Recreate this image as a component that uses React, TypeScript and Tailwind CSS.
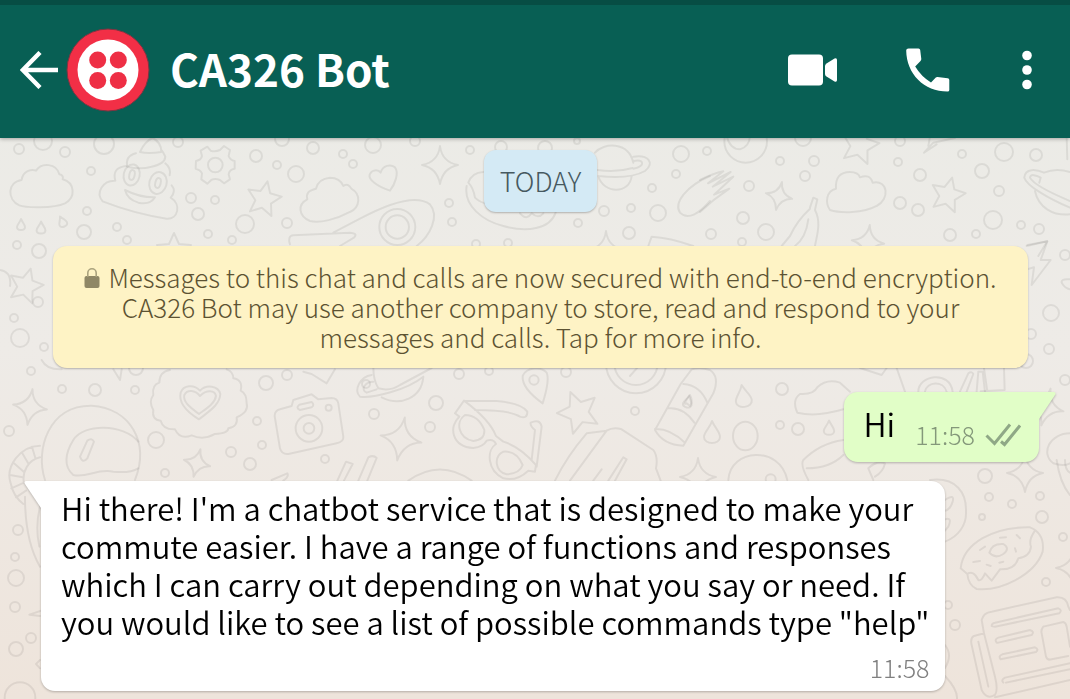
import React from "react";

type Dot = [number, number, number];

const bubbles: Dot[] = [
  [19, 149, 5], [43, 141, 9], [65, 152, 5], [104, 144, 10], [91, 171, 4], [178, 142, 5],
  [256, 156, 6], [277, 165, 4], [282, 139, 7], [313, 148, 6], [296, 174, 8], [343, 154, 4],
  [353, 164, 4], [191, 198, 5], [215, 200, 4], [198, 214, 6], [245, 224, 9], [287, 223, 5],
  [208, 234, 4], [232, 240, 4], [127, 240, 4], [117, 227, 4], [87, 211, 4], [84, 232, 7],
  [17, 245, 4], [39, 251, 7],
  [373, 145, 8], [415, 141, 5], [470, 150, 4], [501, 147, 6], [545, 148, 7], [577, 141, 3],
  [449, 203, 4], [452, 222, 4], [604, 211, 5], [631, 208, 4], [658, 213, 8], [578, 223, 4],
  [629, 233, 6], [681, 154, 8], [676, 174, 4], [652, 188, 4], [707, 151, 4],
  [476, 244, 4], [508, 243, 4],
  [780, 161, 4], [814, 161, 5], [805, 176, 5], [803, 138, 8], [749, 186, 5], [743, 218, 6],
  [711, 234, 5], [766, 232, 8], [742, 242, 4], [900, 141, 5], [898, 162, 4], [920, 175, 6],
  [962, 154, 4], [1004, 152, 9], [1036, 155, 6], [982, 171, 7], [999, 191, 5], [900, 203, 6],
  [918, 210, 6], [993, 220, 9], [1021, 225, 4], [1039, 229, 5], [950, 235, 6], [976, 234, 4],
  [1065, 255, 5], [1051, 313, 8], [1031, 334, 5], [1049, 349, 5], [1026, 361, 7], [1065, 380, 5],
  [31, 371, 4], [62, 389, 4], [95, 390, 6], [135, 390, 4], [9, 431, 5], [136, 368, 7],
  [156, 440, 8], [266, 383, 7], [287, 375, 5], [257, 421, 4], [231, 452, 5], [262, 445, 4],
  [250, 464, 6], [165, 473, 4], [325, 459, 4], [366, 384, 4],
  [374, 414, 5], [436, 403, 7], [430, 427, 5], [459, 374, 5], [489, 371, 4], [566, 372, 5],
  [635, 411, 4], [782, 389, 6], [780, 425, 4], [798, 429, 6], [985, 476, 7],
  [989, 497, 4], [1012, 504, 4], [1040, 496, 4], [982, 517, 3], [1042, 517, 6], [1063, 537, 4],
  [1046, 582, 4], [948, 605, 4], [955, 625, 5],
  [18, 530, 5], [15, 557, 4], [16, 578, 8], [15, 607, 5], [31, 638, 5], [16, 649, 7],
  [20, 338, 9], [38, 302, 5], [14, 318, 4], [44, 347, 4],
];

const STAR = "M0 -17 L5 -6 L17 -5 L8 4 L11 16 L0 10 L-11 16 L-8 4 L-17 -5 L-5 -6 Z";
const SPARK = "M0 -19 Q2 -3 18 0 Q3 3 0 19 Q-3 3 -18 0 Q-2 -3 0 -19 Z";
const DROP = "M0 -10 C3 -3 8 1 8 6 C8 14 -8 14 -8 6 C-8 1 -2 -3 0 -10 Z";

const stars = [
  "translate(264 198) rotate(12)",
  "translate(860 144) rotate(14) scale(1.1)",
  "translate(948 194) rotate(14)",
  "translate(578 411) rotate(-22) scale(1.2)",
  "translate(26 285) rotate(16)",
  "translate(174 250)",
];

const sparks = [
  "translate(440 165)",
  "translate(779 196) rotate(12) scale(.75)",
  "translate(30 407) rotate(8) scale(.95)",
  "translate(197 463) rotate(14) scale(.75)",
  "translate(401 439) rotate(10) scale(1.15)",
  "translate(698 477)",
  "translate(1025 473)",
  "translate(1046 407) rotate(14)",
  "translate(868 242) rotate(6) scale(.9)",
  "translate(606 250)",
  "translate(1074 568)",
];

const drops = [
  "translate(21 224) scale(.5)",
  "translate(41 227) scale(.55)",
  "translate(62 221) rotate(-24) scale(.5)",
  "translate(743 395) rotate(-8)",
  "translate(712 431)",
  "translate(829 427) scale(.65)",
  "translate(688 401) rotate(12) scale(.55)",
];

function Wallpaper() {
  return (
    <svg
      aria-hidden="true"
      className="absolute inset-0 h-full w-full"
      viewBox="0 0 1070 699"
      preserveAspectRatio="xMinYMin slice"
      fill="none"
      stroke="#000"
      strokeOpacity=".07"
      strokeWidth="2"
      strokeLinejoin="round"
      strokeLinecap="round"
    >
      {bubbles.map(([x, y, r], i) => (
        <circle key={i} cx={x} cy={y} r={r} />
      ))}
      {stars.map((t) => <path key={t} d={STAR} transform={t} vectorEffect="non-scaling-stroke" />)}
      {sparks.map((t) => <path key={t} d={SPARK} transform={t} vectorEffect="non-scaling-stroke" />)}
      {drops.map((t) => <path key={t} d={DROP} transform={t} vectorEffect="non-scaling-stroke" />)}

      <g transform="translate(0 136) scale(.3333)" strokeWidth="6">
        <path d="M65 132 C68 105 95 98 108 104 C125 78 170 82 178 115 Q192 118 188 130 C225 140 228 185 195 202 C160 218 75 215 58 208 C20 190 22 138 65 132 Z" />
        <path d="M420 48 Q435 15 458 6 Q485 20 484 48 M420 48 Q445 54 484 48 M408 52 Q375 60 382 92 Q420 102 455 92 Q495 84 496 62 Q490 48 484 42" />
        <path d="M378 90 Q335 95 346 134 C310 132 285 170 308 196 Q400 232 500 248 C535 250 545 205 512 185 Q530 165 515 148 M496 82 Q514 95 509 118" />
        <ellipse cx="395" cy="117" rx="24" ry="32" transform="rotate(12 395 117)" />
        <ellipse cx="396" cy="117" rx="8" ry="15" transform="rotate(12 396 117)" />
        <ellipse cx="474" cy="141" rx="26" ry="33" transform="rotate(14 474 141)" />
        <ellipse cx="474" cy="141" rx="8" ry="15" transform="rotate(14 474 141)" />
        <path d="M375 162 Q420 185 465 184 Q450 208 415 200 Q382 190 375 162 Z" />
        <path d="M622 32 L632 44 Q647 48 660 42 L672 30 L690 42 L686 60 Q690 72 704 75 L704 98 Q688 100 686 115 L690 130 L672 142 L660 132 Q645 126 634 132 L622 143 L604 130 L606 112 Q602 102 587 98 L588 75 Q604 72 606 60 L602 44 Z" />
        <circle cx="646" cy="87" r="22" />
        <path d="M922 190 Q915 165 948 158 Q955 128 990 125 Q1020 125 1030 150 Q1045 140 1054 158 C1085 175 1080 215 1050 228 C1010 250 960 262 930 255 C895 240 892 205 922 190 Z" />
        <path d="M880 298 L1050 290 Q1075 292 1062 305 L1020 330 M880 298 Q862 300 870 325 M1000 290 L1080 248 C1170 200 1250 175 1290 205 C1320 240 1290 300 1250 330" />
        <circle cx="1192" cy="273" r="54" /><circle cx="1192" cy="273" r="35" />
        <path d="M1170 164 C1130 150 1105 130 1109 116 C1115 100 1135 100 1142 110 C1148 88 1172 83 1185 94 C1198 110 1185 145 1170 164 Z" />
      </g>

      <g transform="translate(350 136) scale(.3333)" strokeWidth="6">
        <path d="M400 108 Q365 110 355 140 Q370 155 375 185 Q390 200 415 205 M350 150 C340 210 400 255 460 270 C530 290 600 280 617 230 M510 232 Q530 255 545 232 Q565 250 580 232" />
        <path d="M735 50 C760 20 835 15 850 80 M745 120 C760 175 840 175 845 120 M850 62 C895 55 915 80 885 105 C850 125 790 125 745 120 M742 102 Q800 110 848 96 M852 75 C880 68 890 90 850 98" />
        <path d="M1080 120 C1010 150 970 200 990 230 C1015 255 1050 230 1080 195 M895 330 L905 302 Q960 305 1030 330" />
      </g>

      <g transform="translate(700 136) scale(.3333)" strokeWidth="6">
        <circle cx="137" cy="16" r="64" /><path d="M80 0 Q90 40 120 40 Q148 32 150 0" />
        <path d="M0 132 Q40 112 70 106 L24 142 L92 108 L38 152 L100 122 L42 176 L88 158 Q40 190 0 228" />
        <path d="M330 215 L340 185 L352 190 L345 222 C365 260 350 300 345 330 M330 218 Q290 255 270 300 L245 330 M325 250 Q318 305 285 330" />
        <path d="M408 158 Q405 108 450 108 Q475 108 480 124 Q510 112 518 140 C565 130 570 190 530 210 C490 232 420 232 390 222 C375 200 378 165 408 158 Z" />
        <path d="M765 6 L700 20 L672 50 L710 25 M690 2 L685 30" />
        <path d="M1110 215 C1050 190 980 150 973 125 C975 95 1010 100 1032 110 C1060 98 1085 100 1110 108 M1110 195 C1050 170 1000 145 990 125 C990 112 1010 118 1022 125 M1005 165 C1015 215 1060 240 1110 235 M1022 125 L1018 140" />
        <path d="M980 330 L1042 316 L1015 360 M1100 0 L1102 70" />
      </g>

      <g transform="translate(980 230) scale(.3333)" strokeWidth="6">
        <path d="M142 45 L202 34 L182 90 L212 90 L155 165 L162 112 L142 118" />
        <path d="M270 148 Q240 145 246 160 Q255 175 270 178 M72 415 L74 480 L2 484 M12 415 L22 484" />
      </g>

      <g transform="translate(0 360) scale(.3333)" strokeWidth="6">
        <path d="M510 30 Q478 35 478 68 Q455 75 460 105 Q445 125 460 150 Q455 180 482 182 Q490 210 525 208 Q540 240 575 226 Q610 242 645 222 Q685 220 685 205 Q715 200 710 172 Q748 155 740 130 Q740 100 722 92 Q730 60 700 55 Q700 35 680 28" />
        <path d="M597 178 C560 155 535 128 542 98 C550 75 582 72 600 92 C620 72 655 78 661 102 C660 135 625 155 597 178 Z" />
        <path d="M597 162 C570 142 548 125 553 105 C562 88 585 90 600 108 C620 88 645 90 648 108 C645 130 620 145 597 162 Z" />
        <path d="M840 148 L875 138 L880 120 L935 103 L955 118 L995 114 Q1012 114 1015 130 L1030 230 Q1032 245 1010 250 L865 282 Q845 284 840 265 L824 168 Q824 152 840 148 Z M898 134 L935 126 Q945 134 935 142 L900 150 Q886 144 898 134 Z" />
        <circle cx="927" cy="205" r="40" /><circle cx="927" cy="205" r="16" /><circle cx="986" cy="143" r="9" />
        <path d="M135 360 C105 270 145 135 275 137 C390 145 450 245 405 360" />
        <path d="M415 245 C370 190 250 190 220 240 C195 280 190 320 220 345 C260 355 290 325 340 335 Q390 340 415 325 M240 290 L262 242 Q275 232 282 245 L262 295 Q248 312 240 290 Z" />
        <path d="M120 257 C60 258 15 320 32 370 Q40 410 70 432 M120 292 C85 300 65 335 72 370 M96 260 L106 294 M66 278 L86 312 M42 310 L72 336 M30 345 L68 352 M34 385 L72 368 M48 412 L78 392 M75 410 C75 480 85 560 120 620 M120 440 Q105 500 118 560" />
        <path d="M815 360 L862 340 Q868 350 850 362 M910 35 L935 42 L980 70 L1005 28 M340 28 L360 60 L365 28 M125 0 Q140 30 185 28" />
      </g>

      <g transform="translate(340 360) scale(.3333)" strokeWidth="6">
        <path d="M100 24 Q100 60 115 85 Q150 95 180 75 L275 24 M95 45 C60 50 40 90 60 110 C100 115 200 90 250 50 M100 65 C75 65 60 90 80 98 L110 88 M125 112 C180 140 245 115 250 50" />
        <path d="M548 48 Q545 85 608 130 Q630 60 620 38 C605 20 560 20 548 48" /><circle cx="582" cy="60" r="14" />
        <path d="M372 122 L345 160 L358 170 C325 200 335 260 400 264 Q430 260 440 242 Q460 235 468 252 C440 270 440 330 490 355 Q530 365 565 332 L585 335 L588 315 Q540 260 490 245 L468 228 Q450 180 372 122 Z M372 122 L470 123 Q545 130 562 155 Q562 178 540 170 Q510 150 405 150 M590 320 L605 200 Q600 175 572 188 Q570 198 585 210 L575 300" />
        <path d="M375 165 C345 185 355 235 400 243 Q435 240 433 210 Q415 165 375 165 Z M490 275 C460 290 465 335 500 343 Q540 340 548 315 Q530 272 490 275 Z" />
        <circle cx="888" cy="10" r="90" /><circle cx="888" cy="10" r="65" /><path d="M870 48 L895 20" />
        <path d="M645 362 Q680 290 740 220 L800 212 Q820 200 845 208 L940 270 Q955 290 948 325 L962 362 M800 212 L690 362 M760 362 L785 328 M805 362 L850 292 L860 298 L825 362 M205 362 Q300 295 395 362 M-8 362 L18 305 L38 312 L12 362 M55 362 L85 292 Q100 284 110 294 L82 362" />
      </g>

      <g transform="translate(660 360) scale(.3333)" strokeWidth="6">
        <path d="M70 72 Q120 75 142 128 M62 72 L-15 210 Q10 255 70 257 L160 100 Q180 50 150 30 Q120 20 95 28 L62 72 M25 145 Q70 140 103 188 M-15 207 Q30 205 75 248 M80 130 Q65 138 90 105 Q100 125 90 138 Z" />
        <ellipse cx="256" cy="228" rx="37" ry="43" />
        <path d="M412 158 Q395 120 420 102 Q460 105 472 82 Q500 55 540 68 L570 95 M412 158 Q470 172 550 148" />
        <path d="M205 360 C210 265 360 255 382 360 M430 300 Q480 250 550 240 M430 300 Q420 315 445 360 M440 325 Q510 325 550 285 M640 360 L625 325 Q650 300 675 310 Q670 335 645 350" />
        <circle cx="332" cy="358" r="15" />
        <path d="M710 24 L735 95 M775 95 C775 45 870 30 878 95 M795 95 C800 65 850 60 860 95 M900 95 L925 40 Q935 32 940 42 L920 95 M950 95 L955 35 L968 35 L975 95 M1230 220 C1170 220 1140 280 1180 310 Q1210 320 1230 310 M600 24 L665 45 L680 24" />
      </g>

      <g transform="translate(920 460) scale(.3333)" strokeWidth="6">
        <path d="M30 60 C110 50 140 100 138 155 C140 195 115 230 75 245 M75 120 Q105 100 98 125 Q90 150 75 152 M75 178 Q98 170 85 200 L75 212 M410 0 Q420 70 450 105 M435 0 Q435 30 450 38" />
        <path d="M122 325 C130 250 220 200 330 202 Q375 220 368 275 C345 345 240 395 170 387 Q145 375 142 342 L122 325 M142 342 Q160 330 175 360 Q185 365 195 340 L215 362 L240 328 Q285 330 295 295 Q330 290 333 260 Q325 240 345 212" />
        <path d="M208 278 Q215 250 250 252 Q272 265 250 282 Q225 298 208 278 Z M240 233 L258 232 M290 225 L300 235 M285 265 L288 275 M180 270 L195 260 M160 306 L180 303 M200 314 L212 318 M238 308 L250 305" />
        <path d="M192 520 L185 480 Q190 458 215 455 L410 412 Q440 410 445 440 L450 450 M192 520 L162 528 Q150 535 155 555 L185 690 Q200 720 225 705 Q235 690 225 650 L192 520 M225 712 L450 660 M175 545 L205 680 M215 498 Q215 490 225 488 L415 445 Q428 450 418 460 L225 500 Z M230 548 Q222 538 235 533 L330 510 Q345 515 335 525 L235 548 Z M242 598 Q234 588 247 583 L345 562 Q358 568 348 576 Z M370 500 Q362 510 365 520 L378 590 Q382 602 395 598 L445 588 M370 500 L430 486 Q438 488 440 500 L450 560 M250 668 Q242 660 255 653 L450 610 M258 668 L450 628" />
      </g>

      <g transform="translate(0 470) scale(.3333)" strokeWidth="6">
        <circle cx="60" cy="683" r="46" />
        <path d="M130 420 L88 434 L120 438 M120 570 L108 582 L120 595" />
      </g>
      <path d="M0 270 Q12 272 10 286 M945 645 Q953 655 945 668 M945 676 Q958 690 957 699" />
    </svg>
  );
}

function BackIcon() {
  return (
    <svg viewBox="0 0 38 38" className="h-[38px] w-[38px]" fill="none" stroke="white" strokeWidth="4.4">
      <path d="M20 1.5 L2.8 19 L20 36.5 M2.5 19 H38" />
    </svg>
  );
}

function Avatar() {
  return (
    <svg viewBox="0 0 84 84" className="size-[84px]" role="img" aria-label="CA326 Bot">
      <circle cx="42" cy="42" r="41" fill="#f22f46" stroke="#7c3542" strokeWidth="1" />
      <circle cx="42" cy="42" r="30.5" fill="#fff" />
      <g fill="#ee2f45">
        <circle cx="31.7" cy="32" r="8.5" />
        <circle cx="52.3" cy="32" r="8.5" />
        <circle cx="31.7" cy="52.5" r="8.5" />
        <circle cx="52.3" cy="52.5" r="8.5" />
      </g>
    </svg>
  );
}

function Header() {
  return (
    <header className="relative flex h-[138px] items-center border-t-[5px] border-[#074d44] bg-[#085f54] pr-[33px] pb-[3px] pl-5 text-white shadow-[0_1px_4px_rgba(0,0,0,0.3)]">
      <button type="button" aria-label="Back">
        <BackIcon />
      </button>
      <div className="ml-2">
        <Avatar />
      </div>
      <h1 className="ml-5 flex-1 pb-1 text-[44px] leading-none font-bold">CA326 Bot</h1>
      <button type="button" aria-label="Video call">
        <svg viewBox="0 0 50 32" className="h-8 w-[50px]" fill="white">
          <rect x="0" y="0.5" width="35" height="31" rx="4" />
          <path d="M37 12 Q37 10.500 38.500 9.500 L46.500 4.500 Q49 3.500 49 6 V26 Q49 28.500 46.500 27.500 L38.500 22.500 Q37 21.500 37 20 Z" />
        </svg>
      </button>
      <button type="button" aria-label="Voice call" className="ml-[68px]">
        <svg viewBox="0 0 44 44" className="size-11" fill="white">
          <path d="M2.500 0.500 H12.500 Q14 0.500 14.200 2 L15.300 11 Q15.300 12.200 14.500 13 L9.200 18.600 Q15.500 29 25 34.500 L29.800 29.600 Q30.500 28.900 31.500 29 L41.700 30.300 Q43.300 30.600 43.300 32 V42 Q43.300 43.500 41.500 43.500 C18 43.500 0.500 26 0.200 2.500 Q0.200 0.500 2.500 0.500 Z" />
        </svg>
      </button>
      <button type="button" aria-label="More options" className="ml-[67px]">
        <svg viewBox="0 0 20 40" className="h-10 w-5" fill="white">
          <circle cx="10" cy="5.500" r="4.800" />
          <circle cx="10" cy="20" r="4.800" />
          <circle cx="10" cy="34.500" r="4.800" />
        </svg>
      </button>
    </header>
  );
}

export default function App() {
  return (
    <div className="relative flex min-h-screen flex-col overflow-hidden bg-linear-to-b from-[#eaebe6] via-[#eeebe7] to-[#eee4db] font-['Noto_Sans_CJK_SC','Noto_Sans',sans-serif] font-[350]">
      <Wallpaper />
      <Header />
      <main className="relative flex flex-col pt-3 pb-2">
        <section className="flex flex-col items-center pr-[42px] pl-[53px]">
          <time className="rounded-xl bg-[#d4eaf5] px-4 pt-4 pb-4 text-[27px] leading-[30px] font-light text-[#465960] shadow-[0_1px_2px_rgba(0,0,0,0.25)]">
            TODAY
          </time>

          <button
            type="button"
            className="mt-[34px] w-full rounded-[14px] bg-[#fef3c5] px-5 py-4 text-center text-[26px] leading-[30px] font-light text-[#5c5232] shadow-[0_1px_2px_rgba(0,0,0,0.25)]"
          >
            <svg viewBox="0 0 16 20" aria-hidden="true" className="mr-2 inline-block h-5 w-4 align-baseline">
              <rect x="0.500" y="8" width="15" height="12" rx="2" fill="#8f8766" />
              <path d="M3.800 9 V5 a4.200 4.200 0 0 1 8.400 0 V9" fill="none" stroke="#aaa27d" strokeWidth="1.600" />
            </svg>
            Messages to this chat and calls are now secured with end-to-end encryption.
            <br />
            CA326 Bot may use another company to store, read and respond to your
            <br />
            messages and calls. Tap for more info.
          </button>
        </section>

        <article className="relative mt-6 mr-[31px] flex h-[70px] items-start self-end rounded-[14px] rounded-tr-none bg-[#e1fec7] pt-3 pr-[18px] pl-5 drop-shadow-[0_1px_1px_rgba(0,0,0,0.25)]">
          <svg viewBox="0 0 17 28" aria-hidden="true" className="absolute top-0 left-full h-7 w-[17px]" fill="#e1fec7">
            <path d="M0 0 H15 Q17.500 0.500 16 3 L0 27 Z" />
          </svg>
          <p className="text-[32px] leading-[38px] text-black">Hi</p>
          <time className="mt-4 ml-5 text-[25px] leading-7 font-light text-[#84987a]">11:58</time>
          <svg viewBox="0 0 36 24" aria-label="Delivered" role="img" className="mt-[19px] ml-[10px] h-6 w-9" fill="none" stroke="#8fa886" strokeWidth="3">
            <path d="M1.500 12.500 L9.500 20.500 L25 1.500 M16 18.500 L19.500 21.500 L35 2.500" />
          </svg>
        </article>

        <article className="relative mt-[19px] ml-[41px] flex flex-col self-start rounded-[14px] rounded-tl-none bg-white pt-2 pr-4 pb-[10px] pl-5 drop-shadow-[0_1px_1px_rgba(0,0,0,0.25)]">
          <svg viewBox="0 0 17 28" aria-hidden="true" className="absolute top-0 right-full h-7 w-[17px]" fill="white">
            <path d="M17 0 H2 Q-0.500 0.500 1 3 L17 27 Z" />
          </svg>
          <p className="text-[31px] leading-[38px] text-black">
            Hi there! I'm a chatbot service that is designed to make your
            <br />
            commute easier. I have a range of functions and responses
            <br />
            which I can carry out depending on what you say or need. If
            <br />
            you would like to see a list of possible commands type "help"
          </p>
          <time className="mt-3 self-end text-[25px] leading-7 font-light text-[#808080]">11:58</time>
        </article>
      </main>
    </div>
  );
}
